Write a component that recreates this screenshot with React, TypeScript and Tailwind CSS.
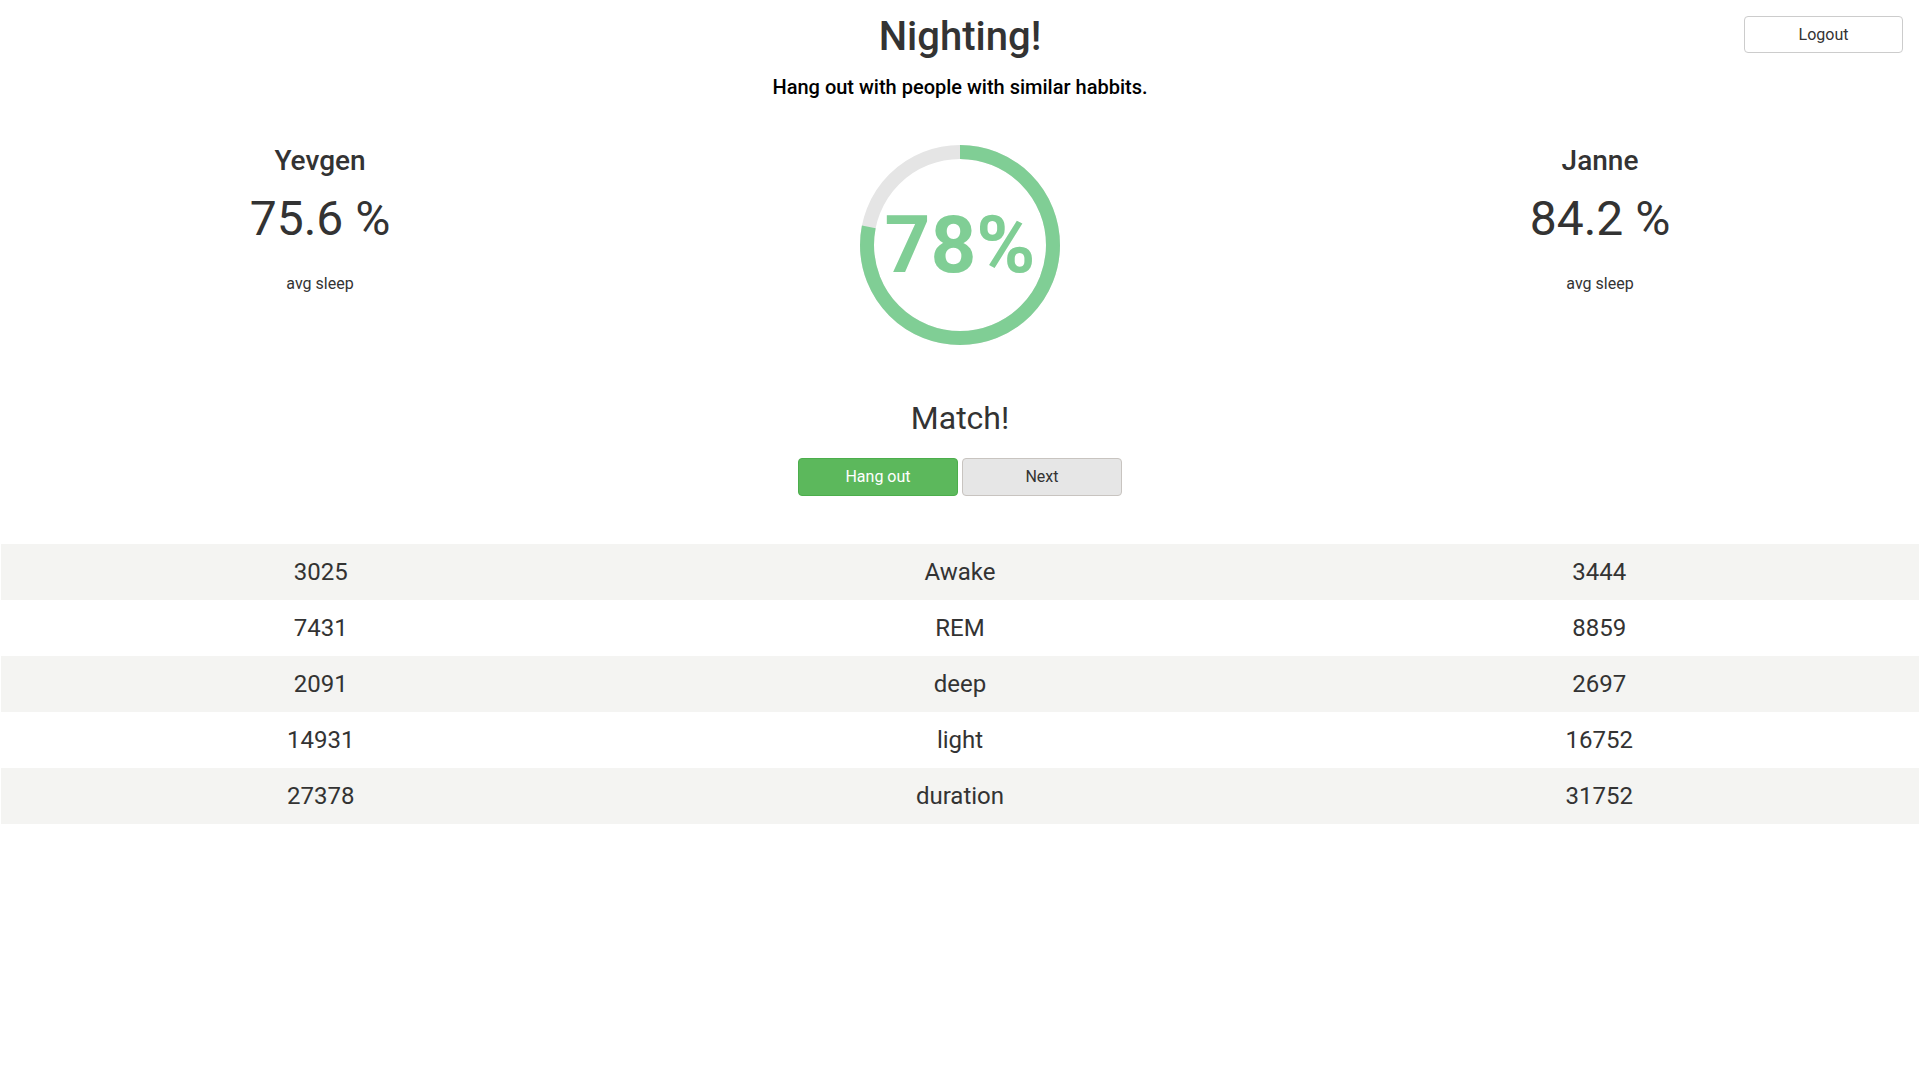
import React from 'react';

const rows = [
  { a: '3025', label: 'Awake', b: '3444' },
  { a: '7431', label: 'REM', b: '8859' },
  { a: '2091', label: 'deep', b: '2697' },
  { a: '14931', label: 'light', b: '16752' },
  { a: '27378', label: 'duration', b: '31752' },
];

function Person({ name, value }: { name: string; value: string }) {
  return (
    <div className="flex flex-col items-center">
      <h2 className="mt-[46px] text-[28px] leading-[32px] font-medium">{name}</h2>
      <div className="mt-[14px] text-[48px] leading-[56px]">{value}</div>
      <p className="mt-[27px] text-[16px] leading-[20px]">avg sleep</p>
    </div>
  );
}

function MatchRing({ percent }: { percent: number }) {
  const r = 93;
  const c = 2 * Math.PI * r;
  return (
    <div className="relative w-[200px] h-[200px]">
      <svg width="200" height="200" viewBox="0 0 200 200">
        <circle cx="100" cy="100" r={r} fill="none" stroke="#e5e5e5" strokeWidth="14" />
        <circle
          cx="100"
          cy="100"
          r={r}
          fill="none"
          stroke="#80ce95"
          strokeWidth="14"
          strokeDasharray={`${(c * percent) / 100} ${c}`}
          transform="rotate(-90 100 100)"
        />
      </svg>
      <div className="absolute inset-0 flex items-center justify-center text-[80px] font-bold text-[#80ce95] leading-none">
        {percent}%
      </div>
    </div>
  );
}

export default function App() {
  return (
    <div
      className="relative min-h-screen bg-white text-[#333]"
      style={{ fontFamily: 'Roboto, "Liberation Sans", sans-serif' }}
    >
      <button className="absolute top-[16px] right-[17px] w-[159px] h-[37px] bg-white border border-[#ccc] rounded-[4px] text-[16px] text-[#333]">
        Logout
      </button>

      <header className="text-center">
        <h1 className="pt-[12px] text-[40px] leading-[50px] font-medium">Nighting!</h1>
        <p className="mt-[13px] text-[20px] leading-[24px] font-medium text-black">
          Hang out with people with similar habbits.
        </p>
      </header>

      <section className="grid grid-cols-3">
        <Person name="Yevgen" value="75.6 %" />
        <div className="flex flex-col items-center">
          <div className="mt-[46px]">
            <MatchRing percent={78} />
          </div>
          <h3 className="mt-[53px] text-[32px] leading-[40px]">Match!</h3>
          <div className="mt-[20px] flex gap-[4px]">
            <button className="w-[160px] h-[38px] rounded-[4px] bg-[#5cb85c] border border-[#4cae4c] text-white text-[16px]">
              Hang out
            </button>
            <button className="w-[160px] h-[38px] rounded-[4px] bg-[#e6e6e6] border border-[#c8c4c0] text-[#333] text-[16px]">
              Next
            </button>
          </div>
        </div>
        <Person name="Janne" value="84.2 %" />
      </section>

      <table className="mt-[48px] ml-px w-[calc(100%-2px)] border-collapse text-[24px]">
        <tbody>
          {rows.map((row, i) => (
            <tr key={row.label} className={i % 2 === 0 ? 'bg-[#f4f4f2]' : 'bg-white'}>
              <td className="h-[56px] w-1/3 text-center">{row.a}</td>
              <td className="h-[56px] w-1/3 text-center">{row.label}</td>
              <td className="h-[56px] w-1/3 text-center">{row.b}</td>
            </tr>
          ))}
        </tbody>
      </table>
    </div>
  );
}
